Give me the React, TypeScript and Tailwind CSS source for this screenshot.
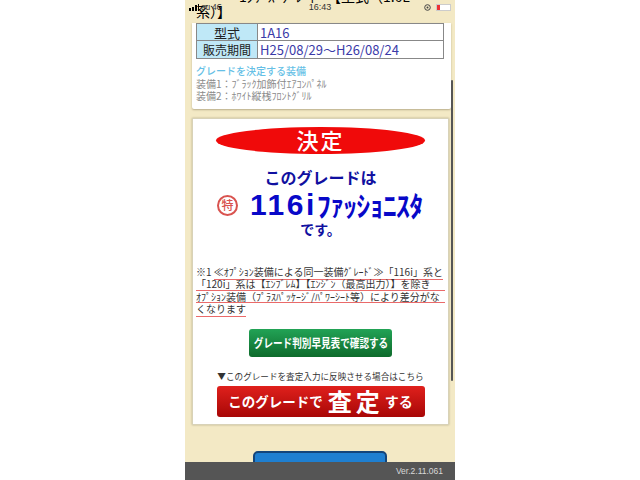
const font = { fontFamily: '"Noto Sans CJK JP","Liberation Sans",sans-serif' };

function Line({ children }: { children: React.ReactNode }) {
  return <div className="h-[12.4px] leading-[11px] border-b border-[#ea6a6a] whitespace-nowrap">{children}</div>;
}

export default function App() {
  return (
    <div className="w-[640px] h-[480px] bg-white flex justify-center overflow-hidden" style={font}>
      <div className="relative w-[270px] h-[480px] bg-[#f3e9c5] overflow-hidden flex flex-col">
        {/* status bar */}
        <div className="absolute top-0 left-0 right-0 h-[14px] flex items-center justify-between text-[9px] text-[#333] z-10">
          <span className="flex items-center gap-[1px] pl-[4px] w-[80px] leading-none">
            <span className="flex items-end gap-[1px] mr-[1px]">
              <span className="w-[2px] h-[3px] bg-black" />
              <span className="w-[2px] h-[4px] bg-black" />
              <span className="w-[2px] h-[6px] bg-black" />
              <span className="w-[1px] h-[7px] bg-black" />
            </span>
            <span className="text-[8px]">au 4G</span>
          </span>
          <span className="font-medium text-[9px] leading-none" style={{ fontFamily: '"Liberation Sans",sans-serif' }}>16:43</span>
          <span className="flex items-center justify-end gap-[5px] w-[80px] pr-[4px]">
            <svg width="7" height="7" viewBox="0 0 7 7"><circle cx="3.5" cy="3.5" r="2.8" fill="none" stroke="#444" strokeWidth="1" /><circle cx="3.5" cy="3.5" r="1" fill="#444" /></svg>
            <span className="w-[15px] h-[7px] border border-[#ccc] bg-white flex">
              <span className="w-[3px] h-full bg-[#e33]" />
            </span>
          </span>
        </div>

        {/* top cut heading */}
        <div className="h-[23px] px-[10px] relative shrink-0">
          <div className="absolute top-[-11px] left-[54px] text-[14px] leading-[14px] text-black whitespace-nowrap">1ｼﾘｰｽﾞｸﾞﾚｰﾄﾞ 【型式（1.6L</div>
          <div className="absolute top-[3px] left-[11px] text-[14px] leading-[16px] text-black whitespace-nowrap">系）】</div>
        </div>

        {/* grade card */}
        <div className="shrink-0 ml-[7px] w-[259px] h-[86px] bg-white rounded-b-[2px] shadow-[0_1px_2px_#b8ad8a] px-[4px] flex flex-col">
          <div className="w-[248px] border border-[#888] text-[13px] leading-[17px] shrink-0">
            <div className="flex h-[17px] border-b border-[#888]">
              <div className="w-[61px] bg-[#bfe8f7] border-r border-[#888] text-center text-[#222]">型式</div>
              <div className="pl-[2px] text-[#3a3aa8]">1A16</div>
            </div>
            <div className="flex h-[17px]">
              <div className="w-[61px] bg-[#bfe8f7] border-r border-[#888] text-center text-[#222] text-[12px]">販売期間</div>
              <div className="pl-[2px] text-[#3a3aa8] text-[13px] whitespace-nowrap">H25/08/29～H26/08/24</div>
            </div>
          </div>
          <div className="mt-[6px] text-[10px] leading-[12px] font-medium text-[#66bfe6]">グレードを決定する装備</div>
          <div className="text-[10px] leading-[13px] text-[#8a8a8a] whitespace-nowrap">装備1：ﾌﾞﾗｯｸ加飾付ｴｱｺﾝﾊﾟﾈﾙ</div>
          <div className="text-[10px] leading-[12px] text-[#8a8a8a] whitespace-nowrap">装備2：ﾎﾜｲﾄ縦桟ﾌﾛﾝﾄｸﾞﾘﾙ</div>
        </div>

        {/* result card */}
        <div className="shrink-0 mt-[9px] ml-[7px] w-[257px] h-[307px] bg-white border border-[#d8d2b8] shadow-[0_0_2px_#b8ad8a] flex flex-col items-center">
          <div className="mt-[8px] w-[209px] h-[27px] rounded-[50%] bg-[#f00a0a] text-white text-[22px] font-medium leading-[25px] text-center tracking-[2px]">決定</div>
          <div className="mt-[13px] text-[16px] leading-[20px] font-bold text-[#1010a0]">このグレードは</div>
          <div className="mt-[2px] h-[32px] self-start flex items-center pl-[24px]">
            <span className="w-[21px] h-[21px] shrink-0 rounded-full border-2 border-[#d9534f] text-[#d9534f] text-[12px] font-medium flex items-center justify-center leading-none mr-[12px]">特</span>
            <span className="text-[30px] leading-[32px] font-bold text-[#0808c8] tracking-[2.5px]" style={{ fontFamily: '"Liberation Sans",sans-serif' }}>116i</span>
            <span className="text-[28px] leading-[32px] font-bold text-[#0808c8] tracking-[-0.8px] whitespace-nowrap">ﾌｧｯｼｮﾆｽﾀ</span>
          </div>
          <div className="mt-[-2px] text-[14px] leading-[20px] font-bold text-[#1010a0]">です。</div>

          <div className="mt-[27px] self-start pl-[3px] w-[252px] text-[10px] text-[#333]">
            <div className="h-[12.4px] leading-[11px] whitespace-nowrap">※1 <span className="border-b border-[#ea6a6a]">≪ｵﾌﾟｼｮﾝ装備による同一装備ｸﾞﾚｰﾄﾞ≫「116i」系と</span></div>
            <Line>「120i」系は【ｴﾝﾌﾞﾚﾑ】【ｴﾝｼﾞﾝ（最高出力）】を除き</Line>
            <Line>ｵﾌﾟｼｮﾝ装備（ﾌﾟﾗｽﾊﾟｯｹｰｼﾞ/ﾊﾟﾜｰｼｰﾄ等）により差分がな</Line>
            <div className="h-[12.4px] leading-[11px]"><span className="border-b border-[#ea6a6a]">くなります</span></div>
          </div>

          <div className="mt-[13px] w-[143px] h-[28px] rounded-[3px] bg-gradient-to-b from-[#22a356] to-[#0e6b2c] text-white font-bold flex items-center justify-center whitespace-nowrap overflow-hidden">
            <span className="inline-block text-[12px] scale-x-[0.8]">グレード判別早見表で確認する</span>
          </div>
          <div className="mt-[12px] text-[8.6px] leading-[14px] text-[#333] whitespace-nowrap">▼このグレードを査定入力に反映させる場合はこちら</div>
          <div className="mt-[3px] w-[208px] h-[31px] rounded-[3px] bg-gradient-to-b from-[#e0201c] to-[#a80606] text-white font-bold flex items-center justify-center whitespace-nowrap">
            <span className="text-[13.5px]">このグレードで</span>
            <span className="text-[24px] leading-[28px] ml-[5px] mr-[1px] tracking-[4px]">査定</span>
            <span className="text-[14px]">する</span>
          </div>
        </div>

        <div className="flex-1 relative">
          <div className="absolute left-[68px] top-[26px] w-[134px] h-[20px] bg-[#1f7fd0] border-2 border-[#14457a] rounded-[5px]" />
        </div>

        {/* scrollbar */}
        <div className="absolute right-[2px] top-[80px] w-[2px] h-[301px] bg-[#555] rounded-full" />

        {/* footer */}
        <div className="absolute bottom-0 left-0 right-0 h-[18px] bg-[#555] text-[#d8d8d8] text-[8.5px] leading-[18px] text-right pr-[12px]" style={{ fontFamily: '"Liberation Sans",sans-serif' }}>Ver.2.11.061</div>
      </div>
    </div>
  );
}
